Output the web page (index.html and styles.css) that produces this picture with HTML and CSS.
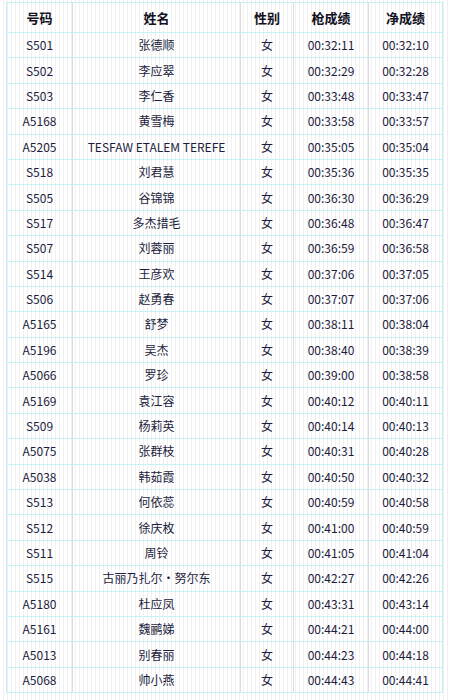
FILE: index.html
```html
<!DOCTYPE html>
<html lang="zh">
<head>
<meta charset="utf-8">
<link rel="stylesheet" href="styles.css">
</head>
<body>
<table class="results">
<thead>
<tr><th class="c1">号码</th><th class="c2">姓名</th><th class="c3">性别</th><th class="c4">枪成绩</th><th class="c5">净成绩</th></tr>
</thead>
<tbody>
<tr><td>S501</td><td>张德顺</td><td>女</td><td>00:32:11</td><td>00:32:10</td></tr>
<tr><td>S502</td><td>李应翠</td><td>女</td><td>00:32:29</td><td>00:32:28</td></tr>
<tr><td>S503</td><td>李仁香</td><td>女</td><td>00:33:48</td><td>00:33:47</td></tr>
<tr><td>A5168</td><td>黄雪梅</td><td>女</td><td>00:33:58</td><td>00:33:57</td></tr>
<tr><td>A5205</td><td>TESFAW ETALEM TEREFE</td><td>女</td><td>00:35:05</td><td>00:35:04</td></tr>
<tr><td>S518</td><td>刘君慧</td><td>女</td><td>00:35:36</td><td>00:35:35</td></tr>
<tr><td>S505</td><td>谷锦锦</td><td>女</td><td>00:36:30</td><td>00:36:29</td></tr>
<tr><td>S517</td><td>多杰措毛</td><td>女</td><td>00:36:48</td><td>00:36:47</td></tr>
<tr><td>S507</td><td>刘蓉丽</td><td>女</td><td>00:36:59</td><td>00:36:58</td></tr>
<tr><td>S514</td><td>王彦欢</td><td>女</td><td>00:37:06</td><td>00:37:05</td></tr>
<tr><td>S506</td><td>赵勇春</td><td>女</td><td>00:37:07</td><td>00:37:06</td></tr>
<tr><td>A5165</td><td>舒梦</td><td>女</td><td>00:38:11</td><td>00:38:04</td></tr>
<tr><td>A5196</td><td>吴杰</td><td>女</td><td>00:38:40</td><td>00:38:39</td></tr>
<tr><td>A5066</td><td>罗珍</td><td>女</td><td>00:39:00</td><td>00:38:58</td></tr>
<tr><td>A5169</td><td>袁江容</td><td>女</td><td>00:40:12</td><td>00:40:11</td></tr>
<tr><td>S509</td><td>杨莉英</td><td>女</td><td>00:40:14</td><td>00:40:13</td></tr>
<tr><td>A5075</td><td>张群枝</td><td>女</td><td>00:40:31</td><td>00:40:28</td></tr>
<tr><td>A5038</td><td>韩茹霞</td><td>女</td><td>00:40:50</td><td>00:40:32</td></tr>
<tr><td>S513</td><td>何依蕊</td><td>女</td><td>00:40:59</td><td>00:40:58</td></tr>
<tr><td>S512</td><td>徐庆枚</td><td>女</td><td>00:41:00</td><td>00:40:59</td></tr>
<tr><td>S511</td><td>周铃</td><td>女</td><td>00:41:05</td><td>00:41:04</td></tr>
<tr><td>S515</td><td>古丽乃扎尔·努尔东</td><td>女</td><td>00:42:27</td><td>00:42:26</td></tr>
<tr><td>A5180</td><td>杜应凤</td><td>女</td><td>00:43:31</td><td>00:43:14</td></tr>
<tr><td>A5161</td><td>魏鹂娣</td><td>女</td><td>00:44:21</td><td>00:44:00</td></tr>
<tr><td>A5013</td><td>别春丽</td><td>女</td><td>00:44:23</td><td>00:44:18</td></tr>
<tr><td>A5068</td><td>帅小燕</td><td>女</td><td>00:44:43</td><td>00:44:41</td></tr>
</tbody>
</table>
</body>
</html>
```
FILE: styles.css
```css
html, body {
  margin: 0;
  padding: 0;
  background-color: #ffffff;
  background-image: repeating-linear-gradient(90deg, transparent 0, transparent 3px, #f0f0f0 3px, #f0f0f0 4px);
}
body {
  padding: 2px 0 0 6px;
  font-family: "Noto Sans CJK SC", "Noto Sans", sans-serif;
  color: #1c1c3c;
}
.results {
  border-collapse: collapse;
  width: 431px;
  table-layout: fixed;
  border: 1px solid #b8f0f6;
  font-size: 12px;
}
.results th,
.results td {
  text-align: center;
  padding: 0;
  border-top: 1px solid #c6f2f7;
  border-bottom: 1px solid #c6f2f7;
  border-left: 1px solid #dcdcdc;
  border-right: 1px solid #dcdcdc;
  white-space: nowrap;
  line-height: 16px;
}
.results th {
  height: 29px;
  font-size: 13px;
  font-weight: bold;
  color: #111122;
}
.results td {
  height: 24.4px;
}
.results tr > :first-child { border-left-color: #b8f0f6; }
.results tr > :last-child { border-right-color: #b8f0f6; }
.c1 { width: 65px; }
.c2 { width: 167px; }
.c3 { width: 52px; }
.c4 { width: 74px; }
.c5 { width: 73px; }
```
